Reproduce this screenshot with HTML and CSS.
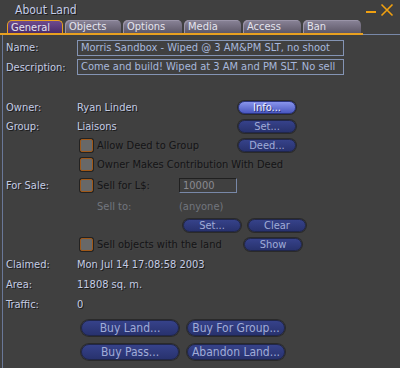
FILE: index.html
```html
<!DOCTYPE html>
<html lang="en">
<head>
    <meta charset="UTF-8">
    <meta name="viewport" content="width=device-width, initial-scale=1.0">
    <title>About Land</title>
    <link rel="stylesheet" href="styles.css">
</head>
<body>
    <div class="window">
        <div class="titlebar">
            <span class="title">About Land</span>
            <span class="controls">
                <svg width="30" height="14" viewBox="0 0 30 14">
                    <rect x="0" y="8" width="10" height="2" fill="#f0a010"/>
                    <path d="M15.5 1.5 L26.5 12.5 M26.5 1.5 L15.5 12.5" stroke="#f0a010" stroke-width="1.6" fill="none"/>
                </svg>
            </span>
        </div>

        <div class="tabbar">
            <div class="tabs">
                <div class="tab selected">General</div>
                <div class="tab">Objects</div>
                <div class="tab">Options</div>
                <div class="tab">Media</div>
                <div class="tab">Access</div>
                <div class="tab">Ban</div>
            </div>
            <div class="tabrest"></div>
        </div>

        <div class="panel">
            <div class="row field-row">
                <span class="label">Name:</span>
                <span class="field">Morris Sandbox - Wiped @ 3 AM&amp;PM SLT, no shoot</span>
            </div>
            <div class="row field-row desc">
                <span class="label">Description:</span>
                <span class="field">Come and build! Wiped at 3 AM and PM SLT. No sell</span>
            </div>

            <div class="row owner">
                <span class="label">Owner:</span>
                <span class="value wide">Ryan Linden</span>
                <button class="btn small bright">Info...</button>
            </div>
            <div class="row line">
                <span class="label">Group:</span>
                <span class="value wide">Liaisons</span>
                <button class="btn small">Set...</button>
            </div>
            <div class="row line">
                <span class="label"></span>
                <span class="check"></span>
                <span class="dim-text cb-wide">Allow Deed to Group</span>
                <button class="btn small">Deed...</button>
            </div>
            <div class="row line">
                <span class="label"></span>
                <span class="check"></span>
                <span class="dim-text">Owner Makes Contribution With Deed</span>
            </div>
            <div class="row sale">
                <span class="label">For Sale:</span>
                <span class="check"></span>
                <span class="dim-text cb-short">Sell for L$:</span>
                <span class="input">10000</span>
            </div>
            <div class="row sellto">
                <span class="label"></span>
                <span class="gray-text indent cb-short">Sell to:</span>
                <span class="gray-text">(anyone)</span>
            </div>
            <div class="row line setclear">
                <button class="btn small">Set...</button>
                <button class="btn small">Clear</button>
            </div>
            <div class="row line">
                <span class="label"></span>
                <span class="check"></span>
                <span class="dim-text cb-mid">Sell objects with the land</span>
                <button class="btn small">Show</button>
            </div>

            <div class="row info">
                <span class="label">Claimed:</span>
                <span class="value">Mon Jul 14 17:08:58 2003</span>
            </div>
            <div class="row info">
                <span class="label">Area:</span>
                <span class="value">11808 sq. m.</span>
            </div>
            <div class="row info">
                <span class="label">Traffic:</span>
                <span class="value">0</span>
            </div>

            <div class="buy-grid">
                <button class="btn large">Buy Land...</button>
                <button class="btn large">Buy For Group...</button>
                <button class="btn large">Buy Pass...</button>
                <button class="btn large">Abandon Land...</button>
            </div>
        </div>
    </div>
</body>
</html>
```

FILE: styles.css
```css
body {
    margin: 0;
    background-color: #404040;
    font-family: "DejaVu Sans Condensed", "DejaVu Sans", sans-serif;
    font-size: 11px;
    color: #c4cce4;
    overflow: hidden;
}

.window {
    width: 400px;
    height: 368px;
    background-color: #404040;
}

.titlebar {
    height: 20px;
    display: flex;
    align-items: center;
    justify-content: space-between;
}

.title {
    margin-left: 15px;
    font-size: 12px;
    color: #c4cce8;
    text-shadow: 1px 1px 0 #1a1a1a;
}

.controls {
    margin-right: 4px;
    height: 14px;
    display: flex;
    align-items: center;
}

.tabbar {
    display: flex;
    height: 15px;
}

.tabs {
    display: flex;
    gap: 2px;
    padding-left: 7px;
    border-bottom: 2px solid #e8a020;
    padding-right: 2px;
}

.tab {
    height: 13px;
    line-height: 14px;
    padding: 0 4px;
    border-radius: 5px 5px 0 0;
    background: linear-gradient(#8a8498, #5e5868);
    color: #e4e4ee;
    box-shadow: inset 1px 1px 0 #9a94a8;
}

.tabs .tab:nth-child(1) { width: 48px; }
.tabs .tab:nth-child(2) { width: 48px; }
.tabs .tab:nth-child(3) { width: 51px; }
.tabs .tab:nth-child(4) { width: 49px; }
.tabs .tab:nth-child(5) { width: 50px; }
.tabs .tab:nth-child(6) { width: 50px; }

.tab.selected {
    height: 12px;
    background: linear-gradient(#6e4a8e, #4a2c6a);
    border: 1px solid #e8a020;
    border-bottom: none;
    box-shadow: none;
    padding: 0 3px;
}

.tabrest {
    flex: 1;
    border-bottom: 1px solid #7888a8;
}

.panel {
    margin-left: 2px;
    height: 333px;
    border-left: 1px solid #6a7898;
    border-bottom: 1px solid #2c2c2c;
    padding: 4px 0 0 3px;
}

.row {
    display: flex;
    align-items: center;
    text-shadow: 1px 1px 0 #1a1a1a;
}

.label {
    width: 71px;
    flex-shrink: 0;
}

.field-row {
    height: 17px;
}

.field-row.desc {
    margin-top: 3px;
    height: 16px;
}

.field {
    width: 262px;
    height: 14px;
    line-height: 14px;
    padding-left: 3px;
    border: 1px solid #8494b4;
    color: #a8b8dc;
    white-space: nowrap;
    overflow: hidden;
    text-shadow: none;
}

.owner {
    margin-top: 25px;
    height: 14px;
}

.line {
    margin-top: 6px;
    height: 13px;
}

.value.wide {
    width: 161px;
}

.check {
    width: 11px;
    height: 11px;
    margin-left: 3px;
    margin-right: 4px;
    background-color: #686868;
    border: 1px solid #a05818;
    border-radius: 2px;
    box-shadow: 0 0 0 1px #222;
}

.dim-text {
    color: #141416;
    text-shadow: 1px 1px 0 #464646;
    white-space: nowrap;
}

.cb-wide {
    width: 141px;
}

.cb-short {
    width: 82px;
}

.cb-mid {
    width: 147px;
}

.sale {
    margin-top: 7px;
    height: 15px;
}

.input {
    width: 53px;
    height: 13px;
    line-height: 13px;
    padding-left: 3px;
    border: 1px solid #7888a8;
    border-top-color: #202020;
    border-left-color: #202020;
    color: #8a8a90;
    text-shadow: none;
}

.sellto {
    margin-top: 6px;
    height: 14px;
}

.gray-text {
    color: #72767e;
    text-shadow: none;
}

.indent {
    margin-left: 20px;
}

.setclear {
    margin-top: 6px;
    padding-left: 177px;
    gap: 7px;
}

.info {
    margin-top: 6px;
    height: 14px;
}

.btn {
    font-family: inherit;
    font-size: 11px;
    padding: 0;
    border: 1px solid #20264a;
    border-radius: 8px;
    background: linear-gradient(#36428a, #28326e);
    color: #a0acd8;
    box-shadow: 0 0 0 1px #2a2a2a;
    text-shadow: none;
    line-height: 11px;
    cursor: pointer;
}

.btn.small {
    width: 58px;
    height: 13px;
}

.btn.bright {
    background: linear-gradient(#8894ec, #4a58c0);
    border-color: #2a3480;
    color: #eef0ff;
    text-shadow: 1px 1px 0 #2a3070;
}

.buy-grid {
    display: grid;
    grid-template-columns: 98px 98px;
    column-gap: 8px;
    row-gap: 8px;
    margin-top: 9px;
    margin-left: 75px;
}

.btn.large {
    height: 16px;
    font-size: 12px;
}
```
